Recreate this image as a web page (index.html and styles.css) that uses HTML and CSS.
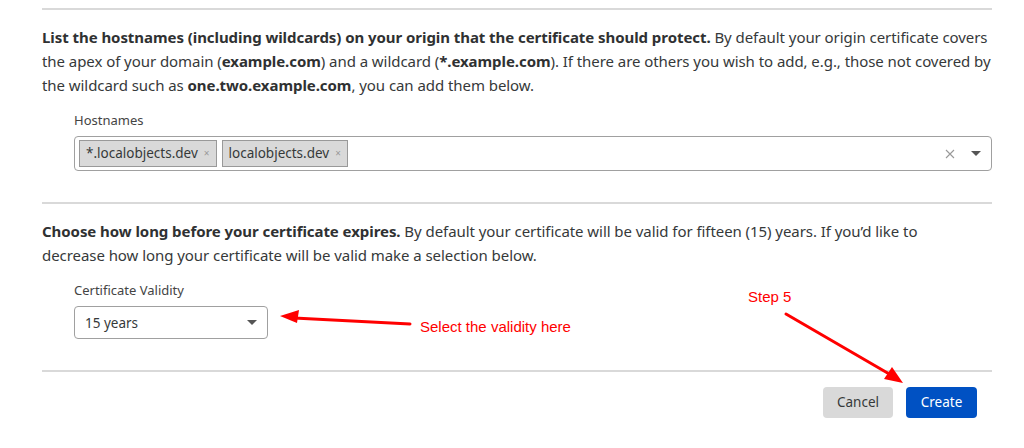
FILE: index.html
```html
<!DOCTYPE html>
<html lang="en">
<head>
<meta charset="utf-8">
<title>Origin certificate</title>
<link rel="stylesheet" href="styles.css">
</head>
<body>
<div class="page">
  <hr class="rule">
  <p class="desc"><strong>List the hostnames (including wildcards) on your origin that the certificate should protect.</strong> By default your origin certificate covers the apex of your domain (<strong>example.com</strong>) and a wildcard (<strong>*.example.com</strong>). If there are others you wish to add, e.g., those not covered by the wildcard such as <strong>one.two.example.com</strong>, you can add them below.</p>
  <div class="field">
    <label class="label">Hostnames</label>
    <div class="multi">
      <div class="chips">
        <span class="chip">*.localobjects.dev <span class="chip-x">×</span></span>
        <span class="chip">localobjects.dev <span class="chip-x">×</span></span>
      </div>
      <div class="controls">
        <svg class="clear" width="10" height="10" viewBox="0 0 10 10"><path d="M1 1L9 9M9 1L1 9" stroke="#999" stroke-width="1.1"/></svg>
        <svg class="caret" width="10" height="5" viewBox="0 0 10 5"><path d="M0 0H10L5 5Z" fill="#555"/></svg>
      </div>
    </div>
  </div>
  <hr class="rule">
  <p class="desc desc-narrow"><strong>Choose how long before your certificate expires.</strong> By default your certificate will be valid for fifteen (15) years. If you’d like to decrease how long your certificate will be valid make a selection below.</p>
  <div class="field">
    <label class="label">Certificate Validity</label>
    <div class="select">
      <span>15 years</span>
      <svg class="caret" width="10" height="5" viewBox="0 0 10 5"><path d="M0 0H10L5 5Z" fill="#555"/></svg>
    </div>
  </div>
  <hr class="rule rule-bottom">
  <div class="actions">
    <button class="btn btn-cancel">Cancel</button>
    <button class="btn btn-create">Create</button>
  </div>
</div>
<div class="annot">
  <svg class="annot-svg" width="1024" height="448" viewBox="0 0 1024 448">
    <path d="M410 324L294 318" stroke="#f00" stroke-width="3" stroke-linecap="round"/>
    <path d="M280 316L299 310L297 323Z" fill="#f00"/>
    <path d="M786 314L891 375" stroke="#f00" stroke-width="3" stroke-linecap="round"/>
    <path d="M903 383L884 379L892 367Z" fill="#f00"/>
  </svg>
  <span class="note note-select">Select the validity here</span>
  <span class="note note-step">Step 5</span>
</div>
</body>
</html>
```
FILE: styles.css
```css
html, body {
  margin: 0;
  padding: 0;
  background: #fff;
}
body {
  font-family: "Noto Sans", "Open Sans", sans-serif;
  color: #36393a;
  width: 1024px;
  height: 448px;
  overflow: hidden;
  position: relative;
}
.page {
  margin-left: 42px;
  width: 950px;
  padding-top: 8px;
}
.rule {
  border: 0;
  height: 2px;
  background: #d9d9d9;
  margin: 0;
}
.desc {
  margin: 15px 0 0;
  font-size: 15px;
  line-height: 24px;
  letter-spacing: -0.06px;
}
.desc-narrow {
  padding-right: 40px;
}
.desc strong {
  font-weight: 700;
  color: #2f3132;
}
.field {
  padding-left: 32px;
  margin-top: 14px;
  display: flex;
  flex-direction: column;
  align-items: flex-start;
}
.label {
  font-size: 13px;
  line-height: 18px;
  color: #444;
  margin-bottom: 7px;
}
.multi {
  align-self: stretch;
  height: 35px;
  box-sizing: border-box;
  border: 1px solid #a0a0a0;
  border-radius: 4px;
  display: flex;
  align-items: center;
  justify-content: space-between;
  padding: 0 10px 0 4px;
  margin-bottom: 31px;
}
.chips {
  display: flex;
  gap: 5px;
}
.chip {
  height: 27px;
  box-sizing: border-box;
  background: #d9d9d9;
  border: 1px solid #999;
  font-size: 13.5px;
  line-height: 25px;
  padding: 0 6px 0 6px;
  color: #36393a;
  display: inline-flex;
  align-items: center;
  gap: 6px;
}
.chip-x {
  font-size: 10px;
  color: #999;
}
.controls {
  display: flex;
  align-items: center;
  gap: 16px;
}
.select {
  width: 194px;
  height: 33px;
  box-sizing: border-box;
  border: 1px solid #a0a0a0;
  border-radius: 4px;
  display: flex;
  align-items: center;
  justify-content: space-between;
  padding: 0 10px 0 10px;
  font-size: 13.5px;
  color: #36393a;
  margin-bottom: 31px;
}
.actions {
  display: flex;
  justify-content: flex-end;
  gap: 13px;
  padding: 15px 15px 0 0;
}
.btn {
  font-family: "Noto Sans", "Open Sans", sans-serif;
  font-size: 13.5px;
  line-height: 18px;
  height: 31px;
  border: 0;
  border-radius: 4px;
  padding: 0 0 1px;
}
.btn-cancel {
  background: #d9d9d9;
  color: #36393a;
  width: 70px;
}
.btn-create {
  background: #0051c3;
  color: #fff;
  width: 71px;
}
.annot {
  position: absolute;
  left: 0;
  top: 0;
  width: 1024px;
  height: 448px;
  pointer-events: none;
}
.annot-svg {
  position: absolute;
  left: 0;
  top: 0;
}
.note {
  position: absolute;
  font-family: "Liberation Sans", Arial, sans-serif;
  font-size: 15px;
  color: #f00;
  line-height: 18px;
}
.note-select {
  left: 420px;
  top: 318px;
}
.note-step {
  left: 748px;
  top: 288px;
}
```
